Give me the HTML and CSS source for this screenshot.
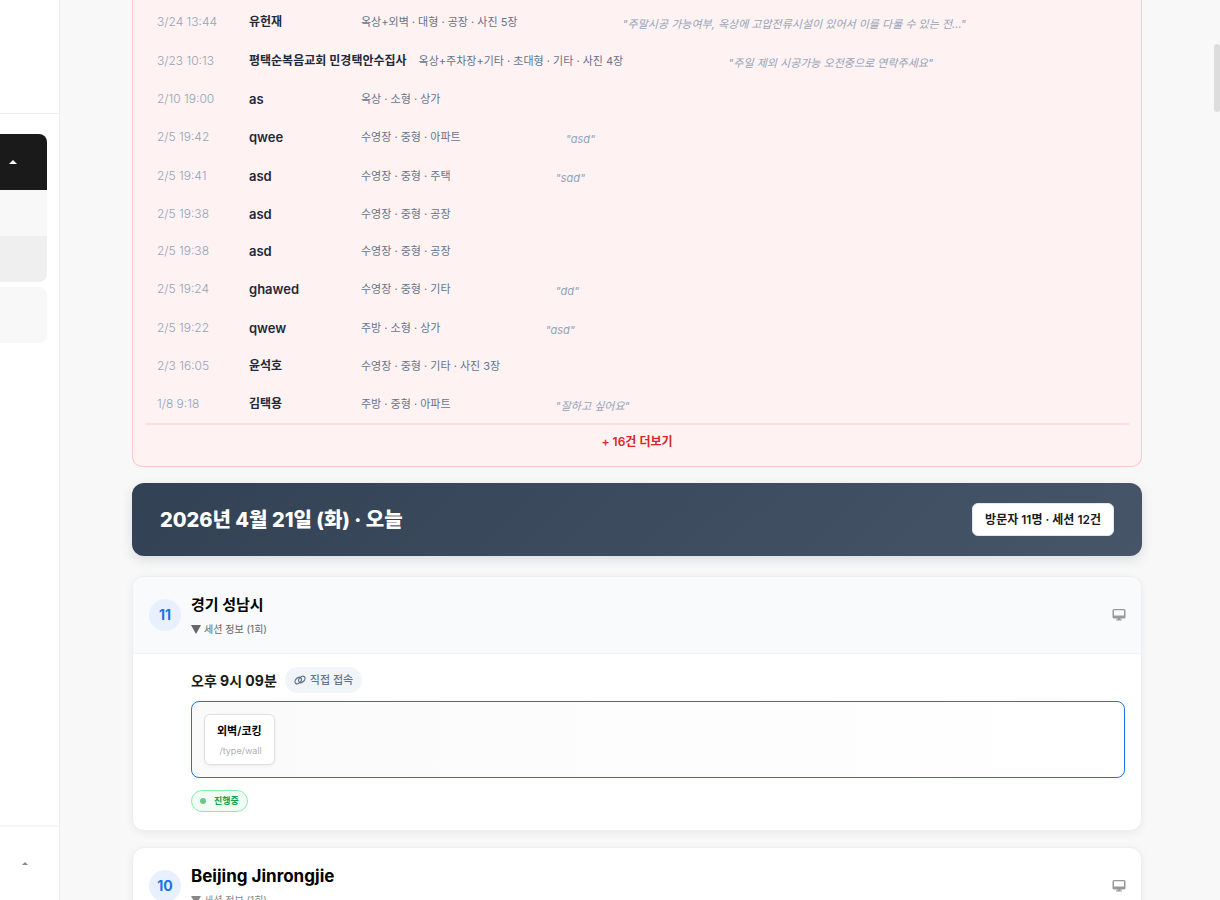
FILE: index.html
```html
<!DOCTYPE html>
<html lang="ko">
<head>
<meta charset="utf-8">
<title>방문자 세션</title>
<link rel="stylesheet" href="styles.css">
</head>
<body>
<svg class="defs" aria-hidden="true">
  <symbol id="monitor" viewBox="0 0 14 14">
    <path fill="currentColor" fill-rule="evenodd" d="M2 1h10a1.500 1.500 0 0 1 1.500 1.500v6.500a1.500 1.500 0 0 1-1.500 1.500H8.500v1h1.500v1H4v-1h1.500v-1H2A1.500 1.500 0 0 1 .5 9V2.500A1.500 1.500 0 0 1 2 1zm0 1.200v5.300h10V2.200z"/>
  </symbol>
</svg>
<div class="app">
  <aside class="sidebar">
    <div class="sidebar-top"></div>
    <nav class="menu">
      <div class="group">
        <button class="group-head" aria-label="메뉴 접기"><svg class="caret" viewBox="0 0 8 4"><path fill="currentColor" d="M0 4 4 0l4 4z"/></svg></button>
        <div class="sub"></div>
        <div class="sub sub-active"></div>
      </div>
      <div class="group-closed"></div>
    </nav>
    <button class="account" aria-label="계정 메뉴"><svg class="caret-small" viewBox="0 0 6 3"><path fill="currentColor" d="M0 3 3 0l3 3z"/></svg></button>
  </aside>
  <main class="main">
    <section class="requests">
      <ul class="rows">
        <li class="row noted"><time>3/24 13:44</time><strong class="hangul">유헌재</strong><span class="detail">옥상+외벽 · 대형 · 공장 · 사진 5장</span><em>"주말시공 가능여부, 옥상에 고압전류시설이 있어서 이를 다룰 수 있는 전..."</em></li>
        <li class="row noted"><time>3/23 10:13</time><strong class="hangul">평택순복음교회 민경택안수집사</strong><span class="detail">옥상+주차장+기타 · 초대형 · 기타 · 사진 4장</span><em>"주일 제외 시공가능 오전중으로 연락주세요"</em></li>
        <li class="row"><time>2/10 19:00</time><strong>as</strong><span class="detail">옥상 · 소형 · 상가</span></li>
        <li class="row noted"><time>2/5 19:42</time><strong>qwee</strong><span class="detail">수영장 · 중형 · 아파트</span><em>"asd"</em></li>
        <li class="row noted"><time>2/5 19:41</time><strong>asd</strong><span class="detail">수영장 · 중형 · 주택</span><em>"sad"</em></li>
        <li class="row"><time>2/5 19:38</time><strong>asd</strong><span class="detail">수영장 · 중형 · 공장</span></li>
        <li class="row"><time>2/5 19:38</time><strong>asd</strong><span class="detail">수영장 · 중형 · 공장</span></li>
        <li class="row noted"><time>2/5 19:24</time><strong>ghawed</strong><span class="detail">수영장 · 중형 · 기타</span><em>"dd"</em></li>
        <li class="row noted"><time>2/5 19:22</time><strong>qwew</strong><span class="detail">주방 · 소형 · 상가</span><em>"asd"</em></li>
        <li class="row"><time>2/3 16:05</time><strong class="hangul">윤석호</strong><span class="detail">수영장 · 중형 · 기타 · 사진 3장</span></li>
        <li class="row noted"><time>1/8 9:18</time><strong class="hangul">김택용</strong><span class="detail">주방 · 중형 · 아파트</span><em>"잘하고 싶어요"</em></li>
      </ul>
      <button class="more">+ 16건 더보기</button>
    </section>

    <header class="day">
      <h2>2026년 4월 21일 (화) · 오늘</h2>
      <span class="totals">방문자 11명 · 세션 12건</span>
    </header>

    <article class="card">
      <div class="card-head tinted">
        <span class="number">11</span>
        <div class="who">
          <h3>경기 성남시</h3>
          <button class="toggle"><svg class="down" viewBox="0 0 10 9"><path fill="currentColor" d="M0 0h10L5 9z"/></svg>세션 정보 (1회)</button>
        </div>
        <svg class="device"><use href="#monitor"/></svg>
      </div>
      <div class="session">
        <div class="when">
          <h4>오후 9시 09분</h4>
          <span class="source"><svg class="link" viewBox="0 0 12 10" fill="none" stroke="currentColor" stroke-width="1.200"><ellipse cx="4.200" cy="5.600" rx="3.700" ry="2.600" transform="rotate(-45 4.200 5.600)"/><ellipse cx="7.800" cy="4.400" rx="3.700" ry="2.600" transform="rotate(-45 7.800 4.400)"/></svg>직접 접속</span>
        </div>
        <div class="path">
          <div class="page"><b>외벽/코킹</b><small>/type/wall</small></div>
        </div>
        <span class="status"><i class="dot"></i>진행중</span>
      </div>
    </article>

    <article class="card">
      <div class="card-head">
        <span class="number">10</span>
        <div class="who">
          <h3 class="latin">Beijing Jinrongjie</h3>
          <button class="toggle muted"><svg class="down" viewBox="0 0 10 9"><path fill="currentColor" d="M0 0h10L5 9z"/></svg>세션 정보 (1회)</button>
        </div>
        <svg class="device"><use href="#monitor"/></svg>
      </div>
    </article>
  </main>
  <div class="scroll-thumb"></div>
</div>
</body>
</html>
```
FILE: styles.css
```css
* { box-sizing: border-box; }
body {
  margin: 0;
  background: #f8f8f8;
  color: #1a1a1a;
  font-family: Inter, "Noto Sans CJK KR", sans-serif;
  font-size: 12px;
  line-height: 16px;
}
button { border: 0; padding: 0; background: none; font: inherit; color: inherit; cursor: pointer; }
h2, h3, h4, ul { margin: 0; padding: 0; }
.defs { display: none; }

.app { position: relative; display: flex; height: 100vh; overflow: hidden; }

.sidebar {
  flex: none;
  width: 60px;
  display: flex;
  flex-direction: column;
  background: #fff;
  border-right: 1px solid #eee;
}
.sidebar-top { height: 114px; border-bottom: 1px solid #eee; }
.menu { flex: 1; padding: 20px 12px 0 0; }
.group { border-radius: 0 8px 8px 0; overflow: hidden; margin-bottom: 5px; }
.group-head {
  display: flex;
  align-items: center;
  width: 100%;
  height: 56px;
  padding-left: 9px;
  background: #1a1a1a;
  color: #fff;
}
.caret { width: 8px; height: 4px; }
.sub { height: 46px; background: #f8f8f8; }
.sub-active { background: #efefef; }
.group-closed { height: 56px; border-radius: 0 8px 8px 0; background: #f8f8f8; }
.account {
  height: 75px;
  padding-left: 22px;
  display: flex;
  align-items: center;
  border-top: 2px solid #f5f5f5;
  color: #888;
}
.caret-small { width: 6px; height: 3px; }

.main { flex: 1; min-width: 0; padding: 0 78px 0 72px; }

.requests {
  padding: 2px 12px 9px;
  background: #fef2f2;
  border: 1px solid #fecaca;
  border-top: 0;
  border-radius: 0 0 10px 10px;
}
.rows { list-style: none; border-bottom: 2px solid #fedddd; }
.row { display: flex; align-items: center; gap: 12px; height: 37px; padding: 0 12px; white-space: nowrap; }
.noted { height: 39px; }
.row time { min-width: 80px; color: #94a3b8; font-weight: 300; }
.row strong { min-width: 100px; padding-top: 1px; font-size: 13px; font-weight: 600; color: #1e293b; }
.row .hangul { font-size: 12px; }
.detail { color: #64748b; font-size: 11px; }
.row em { margin-left: 93px; padding-top: 4px; color: #94a3b8; font-size: 11px; }
.more { display: block; width: 100%; height: 32px; padding-top: 2px; color: #dc2626; font-weight: 600; }

.day {
  display: flex;
  align-items: center;
  justify-content: space-between;
  margin: 16px 0 20px;
  padding: 20px 28px;
  border-radius: 12px;
  background: linear-gradient(135deg, #334155, #475569);
  box-shadow: 0 4px 12px rgba(51, 65, 85, 0.15);
  color: #fff;
}
.day h2 { font-size: 20px; line-height: 32px; font-weight: 800; }
.totals {
  padding: 8px 12px;
  border: 1px solid #e2e8f0;
  border-radius: 6px;
  background: #fff;
  color: #1a1a1a;
  font-weight: 600;
  line-height: 15px;
}

.card {
  margin-bottom: 16px;
  border: 1px solid #eee;
  border-radius: 12px;
  background: #fff;
  box-shadow: 0 2px 8px rgba(0, 0, 0, 0.06);
  overflow: hidden;
}
.card-head { display: flex; align-items: center; gap: 10px; height: 76px; padding: 0 15px 0 16px; }
.tinted { height: 77px; background: #f8fafc; border-bottom: 1px solid #f1f3f5; }
.number {
  display: flex;
  align-items: center;
  justify-content: center;
  width: 32px;
  height: 32px;
  border-radius: 50%;
  background: #e8f0fe;
  color: #1a73e8;
  font-size: 14px;
  font-weight: 700;
}
.who { flex: 1; padding-top: 2px; }
.who h3 { color: #000; font-size: 15px; line-height: 24px; font-weight: 700; }
.who .latin { font-size: 17px; }
.toggle { display: flex; align-items: center; gap: 3px; margin-top: 2px; font-size: 10px; line-height: 20px; color: #666; }
.muted { color: #888; }
.down { width: 10px; height: 9px; }
.device { width: 14px; height: 14px; color: #999; }

.session { padding: 13px 16px 18px 58px; }
.when { display: flex; align-items: center; gap: 8px; margin-bottom: 8px; }
.when h4 { padding-top: 2px; font-size: 14px; line-height: 24px; font-weight: 700; }
.source {
  display: flex;
  align-items: center;
  gap: 4px;
  height: 26px;
  padding: 0 9px;
  border-radius: 13px;
  background: #f1f5f9;
  color: #64748b;
  font-size: 11px;
  font-weight: 500;
}
.link { width: 12px; height: 10px; }
.path {
  display: flex;
  padding: 12px;
  border: 1px solid #1a73e8;
  border-radius: 8px;
  background: linear-gradient(90deg, #fafafa, #fff);
}
.page {
  padding: 7px 12px;
  border: 1px solid #e0e0e0;
  border-radius: 6px;
  background: #fff;
  box-shadow: 0 1px 3px rgba(0, 0, 0, 0.06);
  text-align: right;
}
.page b, .page small { display: block; }
.page b { color: #000; font-size: 11px; font-weight: 600; line-height: 18px; }
.page small { margin-top: 4px; color: #b0b0b0; font-size: 9px; line-height: 13px; }
.status {
  display: inline-flex;
  align-items: center;
  gap: 8px;
  height: 22px;
  margin-top: 12px;
  padding: 0 8px;
  border: 1px solid #86efac;
  border-radius: 11px;
  background: #f0fdf4;
  color: #16a34a;
  font-size: 9px;
  font-weight: 600;
  vertical-align: top;
}
.dot { width: 6px; height: 6px; border-radius: 50%; background: #6cc788; }

.scroll-thumb {
  position: absolute;
  top: 44px;
  right: 0;
  width: 6px;
  height: 68px;
  border-radius: 3px;
  background: #ddd;
}
```
